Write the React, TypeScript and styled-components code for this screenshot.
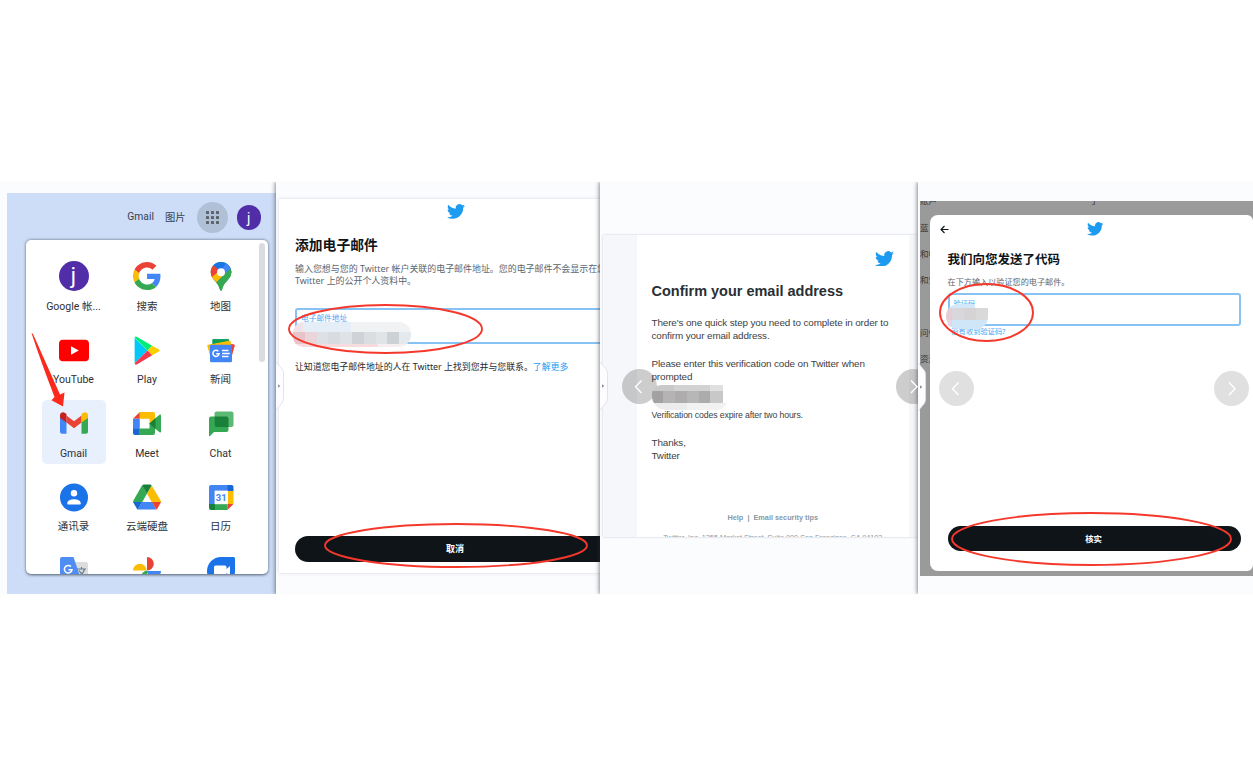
import React from "react";
import styled, { createGlobalStyle } from "styled-components";

const GlobalStyle = createGlobalStyle`
  * { box-sizing: border-box; }
  body { margin: 0; background: #fff; font-family: Roboto, "Noto Sans CJK SC", sans-serif; }
  p, h1, h2 { margin: 0; }
  svg { display: block; flex: none; }
`;

const Page = styled.main`
  width: 1253px;
  height: 775px;
  padding-top: 182px;
  overflow: hidden;
`;

const Strip = styled.div`
  display: grid;
  grid-template-columns: 276px 324px 318px 335px;
  height: 412px;
  overflow: hidden;
`;

const Column = styled.section<{ $pad: string; $raised?: boolean }>`
  position: relative;
  min-width: 0;
  padding: ${(p) => p.$pad};
  background: #fbfcfe;
  box-shadow: ${(p) => (p.$raised ? "-1px 0 4px rgba(40, 45, 60, 0.55)" : "none")};
`;

const Clip = styled.div`
  overflow: hidden;
`;

/* ---------- Google launcher ---------- */

const Desktop = styled.div`
  height: 401px;
  background: #cdddf7;
  padding-left: 19px;
`;

const TopBar = styled.header`
  display: flex;
  align-items: center;
  justify-content: flex-end;
  height: 47px;
  padding: 2px 15px 0 0;
  font-size: 10.3px;
  color: #35414f;
`;

const TopLink = styled.span<{ $gap: number }>`
  margin-right: ${(p) => p.$gap}px;
  padding-bottom: 1.5px;
`;

const GridButton = styled.div`
  display: grid;
  place-items: center;
  width: 31px;
  height: 31px;
  margin-right: 9px;
  border-radius: 50%;
  background: #b0c0d6;
`;

const Avatar = styled.div<{ $size: number; $font: number }>`
  display: grid;
  place-items: center;
  width: ${(p) => p.$size}px;
  height: ${(p) => p.$size}px;
  border-radius: 50%;
  background: #512da8;
  color: #fff;
  font-size: ${(p) => p.$font}px;
  line-height: 1;
`;

const Launcher = styled.div`
  display: flex;
  justify-content: space-between;
  width: 242px;
  height: 334px;
  padding: 3px 3px 0 15.5px;
  overflow: hidden;
  border-radius: 5px;
  background: #fff;
  box-shadow: 0 0.5px 3px rgba(50, 60, 75, 0.8);
`;

const AppGrid = styled.div`
  display: grid;
  grid-template-columns: repeat(3, 64px);
  grid-auto-rows: 64px;
  gap: 9.5px;
  padding-top: 9.5px;
`;

const AppCell = styled.div<{ $active?: boolean }>`
  display: flex;
  flex-direction: column;
  align-items: center;
  padding-top: 8.5px;
  border-radius: 5px;
  background: ${(p) => (p.$active ? "#e8f0fe" : "transparent")};
`;

const AppLabel = styled.span`
  margin-top: 8.5px;
  font-size: 10.5px;
  line-height: 14px;
  white-space: nowrap;
  color: #303134;
`;

const ScrollThumb = styled.div`
  width: 6px;
  height: 119px;
  border-radius: 3px;
  background: #dadce0;
`;

/* ---------- Twitter dialogs ---------- */

const EmailDialog = styled.div`
  height: 374px;
  padding: 5px 0 0 16px;
  background: #fff;
  box-shadow: 0 0 3px rgba(70, 80, 110, 0.22);
  font-family: "Noto Sans", "Noto Sans CJK SC", sans-serif;
`;

const Dim = styled.div`
  position: relative;
  height: 375px;
  padding: 13.5px 0 0 10px;
  overflow: hidden;
  background: #999a99;
  font-family: "Noto Sans", "Noto Sans CJK SC", sans-serif;
`;

const CodeDialog = styled.div`
  position: relative;
  height: 356.5px;
  padding: 7.5px 12.5px 0 17.5px;
  border-radius: 8px 6px 6px 8px;
  background: #fff;
`;

const LogoRow = styled.div<{ $shift: number }>`
  display: flex;
  padding-left: ${(p) => p.$shift}px;
`;

const Heading = styled.h1<{ $size: number; $top: number }>`
  margin-top: ${(p) => p.$top}px;
  font-size: ${(p) => p.$size}px;
  line-height: 20px;
  font-weight: 700;
  white-space: nowrap;
  color: #0f1419;
`;

const Copy = styled.p<{ $size: number; $top: number; $tone?: string }>`
  margin-top: ${(p) => p.$top}px;
  font-size: ${(p) => p.$size}px;
  line-height: 12px;
  white-space: pre;
  color: ${(p) => p.$tone ?? "#5b6670"};
`;

const Link = styled.span`
  color: #1d9bf0;
`;

const Field = styled.div<{ $h: number; $top: number; $open?: boolean }>`
  height: ${(p) => p.$h}px;
  margin-top: ${(p) => p.$top}px;
  padding: 2.5px 4px;
  border: 2px solid #86c2f2;
  border-right-width: ${(p) => (p.$open ? 0 : 2)}px;
  border-radius: ${(p) => (p.$open ? "3px 0 0 3px" : "3px")};
  font-size: ${(p) => (p.$open ? 7.7 : 7.2)}px;
  line-height: 12px;
  color: #3fa9f5;
`;

const PillButton = styled.div<{ $h: number; $top: number; $open?: boolean }>`
  display: flex;
  align-items: center;
  justify-content: center;
  height: ${(p) => p.$h}px;
  margin-top: ${(p) => p.$top}px;
  padding-right: ${(p) => (p.$open ? 0 : 1)}px;
  padding-bottom: 1.5px;
  padding-left: ${(p) => (p.$open ? 15 : 0)}px;
  border-radius: ${(p) => (p.$open ? "13px 0 0 13px" : "13px")};
  background: #0f1419;
  color: #fff;
  font-size: ${(p) => (p.$open ? 9 : 8.4)}px;
  font-weight: 700;
`;

const Behind = styled.span<{ $x: number; $y: number }>`
  position: absolute;
  left: ${(p) => p.$x}px;
  top: ${(p) => p.$y}px;
  font-size: 8.5px;
  line-height: 10px;
  white-space: nowrap;
  color: #33373a;
`;

const BackSlot = styled.div`
  position: absolute;
  left: 10px;
  top: 10px;
`;

/* ---------- Mail ---------- */

const Mail = styled.div`
  height: 302px;
  padding: 0 9px 0 34px;
  overflow: hidden;
  background: #f6f7fa;
  box-shadow: 0 0 2px rgba(70, 80, 110, 0.3);
  font-family: "Liberation Sans", Arial, sans-serif;
`;

const MailBody = styled.div`
  display: flex;
  flex-direction: column;
  height: 302px;
  padding: 15.5px 15px 0 14.5px;
  background: #fff;
`;

const MailLogo = styled.div`
  align-self: flex-end;
`;

const MailTitle = styled.h2`
  margin-top: 15px;
  font-size: 14.5px;
  line-height: 20px;
  letter-spacing: -0.01px;
  white-space: nowrap;
  color: #292f33;
`;

const MailText = styled.p<{ $top: number; $size?: number }>`
  margin-top: ${(p) => p.$top}px;
  font-size: ${(p) => p.$size ?? 9.9}px;
  line-height: 13.5px;
  letter-spacing: -0.12px;
  white-space: pre;
  color: #3c4043;
`;

const MailFooter = styled.p<{ $top: number; $size: number; $bold?: boolean }>`
  margin-top: ${(p) => p.$top}px;
  font-size: ${(p) => p.$size}px;
  line-height: 10px;
  font-weight: ${(p) => (p.$bold ? 700 : 400)};
  text-align: center;
  white-space: pre;
  color: #8899a6;
`;

/* ---------- Overlays ---------- */

const Overlay = styled.div<{ $x: number; $y: number }>`
  position: absolute;
  left: ${(p) => p.$x}px;
  top: ${(p) => p.$y}px;
  z-index: 2;
`;

const Mosaic = styled.div<{ $w: number; $r: string }>`
  display: flex;
  flex-direction: column;
  width: ${(p) => p.$w}px;
  border-radius: ${(p) => p.$r};
  overflow: hidden;
`;

const MosaicRow = styled.div<{ $h: number }>`
  display: flex;
  height: ${(p) => p.$h}px;
`;

const Tile = styled.div<{ $c: string; $w?: number }>`
  flex: ${(p) => (p.$w ? `0 0 ${p.$w}px` : "1 0 0")};
  background: ${(p) => p.$c};
`;

const Arrow = styled.div<{ $alpha: number }>`
  display: grid;
  place-items: center;
  width: 35px;
  height: 35px;
  border-radius: 50%;
  background: rgba(60, 60, 60, ${(p) => p.$alpha});
`;

const CropRight = styled.div`
  width: 22px;
  overflow: hidden;
`;

type MosaicData = { h: number; tiles: [string, number?][] }[];

const Pixels = ({ w, r, rows }: { w: number; r: string; rows: MosaicData }) => (
  <Mosaic $w={w} $r={r}>
    {rows.map((row, i) => (
      <MosaicRow key={i} $h={row.h}>
        {row.tiles.map(([c, tw], j) => (
          <Tile key={j} $c={c} $w={tw} />
        ))}
      </MosaicRow>
    ))}
  </Mosaic>
);

const Ring = ({ rx, ry }: { rx: number; ry: number }) => (
  <svg width={rx * 2 + 4} height={ry * 2 + 4}>
    <ellipse cx={rx + 2} cy={ry + 2} rx={rx} ry={ry} fill="none" stroke="#f5382c" strokeWidth="1.9" />
  </svg>
);

const Chevron = ({ dir }: { dir: "left" | "right" }) => (
  <svg width="35" height="35" viewBox="0 0 35 35">
    <path
      d={dir === "left" ? "M19.500 11.5L13.500 17.8L19.500 24" : "M15 11.5L21 17.8L15 24"}
      fill="none"
      stroke="#fff"
      strokeWidth="1.4"
    />
  </svg>
);

const Handle = () => (
  <svg width="9" height="50" viewBox="0 0 9 50">
    <path d="M0 1L6 8Q7.500 10 7.500 12V37Q7.500 40 6 42L0 49Z" fill="#fdfdff" />
    <path d="M0 1L6 8Q7.500 10 7.500 12V37Q7.500 40 6 42L0 49" fill="none" stroke="#dcdee5" strokeWidth="0.8" />
    <path d="M2 23.300L4.300 25L2 26.700Z" fill="#8b8f9c" />
  </svg>
);

const Bird = ({ w }: { w: number }) => (
  <svg width={w} height={(w * 20) / 24} viewBox="0 2 24 20">
    <path
      fill="#1d9bf0"
      d="M23.953 4.57a10 10 0 01-2.825.775 4.958 4.958 0 002.163-2.723c-.951.555-2.005.959-3.127 1.184a4.92 4.92 0 00-8.384 4.482C7.69 8.095 4.067 6.13 1.64 3.162a4.822 4.822 0 00-.666 2.475c0 1.71.87 3.213 2.188 4.096a4.904 4.904 0 01-2.228-.616v.06a4.923 4.923 0 003.946 4.827 4.996 4.996 0 01-2.212.085 4.936 4.936 0 004.604 3.417 9.867 9.867 0 01-6.102 2.105c-.39 0-.779-.023-1.17-.067a13.995 13.995 0 007.557 2.209c9.053 0 13.998-7.496 13.998-13.985 0-.21 0-.42-.015-.63A9.935 9.935 0 0024 4.59z"
    />
  </svg>
);

const Icon = ({ children }: { children: React.ReactNode }) => (
  <svg width="30" height="30" viewBox="0 0 30 30">
    {children}
  </svg>
);

const GoogleG = () => (
  <Icon>
    <g transform="translate(1 1) scale(.585)">
      <path fill="#ea4335" d="M24 9.5c3.54 0 6.71 1.22 9.21 3.6l6.85-6.85C35.9 2.38 30.47 0 24 0 14.62 0 6.51 5.38 2.56 13.22l7.98 6.19C12.43 13.72 17.74 9.5 24 9.5z" />
      <path fill="#4285f4" d="M46.98 24.55c0-1.57-.15-3.09-.38-4.55H24v9.02h12.94c-.58 2.96-2.26 5.48-4.78 7.18l7.73 6c4.51-4.18 7.09-10.36 7.09-17.65z" />
      <path fill="#fbbc05" d="M10.53 28.59c-.48-1.45-.76-2.99-.76-4.59s.27-3.14.76-4.59l-7.98-6.19C.92 16.46 0 20.12 0 24c0 3.88.92 7.54 2.56 10.78l7.97-6.19z" />
      <path fill="#34a853" d="M24 48c6.48 0 11.93-2.13 15.89-5.81l-7.73-6c-2.15 1.45-4.92 2.3-8.16 2.3-6.26 0-11.57-4.22-13.47-9.91l-7.98 6.19C6.51 42.62 14.62 48 24 48z" />
    </g>
  </Icon>
);

const PIN = "M15 1C9.200 1 4.700 5.500 4.700 11.200C4.700 18.500 12.500 20.500 14 28.700Q15 31 16 28.700C17.500 20.500 25.300 18.500 25.300 11.200C25.300 5.500 20.800 1 15 1Z";

const MapsPin = () => (
  <Icon>
    <clipPath id="pin">
      <path d={PIN} />
    </clipPath>
    <g clipPath="url(#pin)">
      <rect width="30" height="30" fill="#34a853" />
      <path d="M0 0H30V3L15 11L7.500 4.600L0 0Z" fill="#1a73e8" />
      <path d="M20 0H30V9L11.500 30L5 24L25 1Z" fill="#34a853" />
      <path d="M21.500 0L30 0V9L22 15L16 8Z" fill="#4285f4" />
      <path d="M22 3L25.500 8L11 24L6 19Z" fill="#4285f4" />
      <path d="M0 2L7.300 4.300L14 10L6 20L0 20Z" fill="#ea4335" />
      <path d="M12 11L4 17.500L9.500 22.500L19 13Z" fill="#fbbc04" />
      <path d="M9 22.600L25.600 6.500L27 30H5Z" fill="#34a853" />
    </g>
    <circle cx="15" cy="11.300" r="4" fill="#fff" />
  </Icon>
);

const YouTube = () => (
  <Icon>
    <rect x="0" y="4.800" width="30" height="21.400" rx="4" fill="#f00" />
    <path d="M12 11.300L19.800 15.500L12 19.700Z" fill="#fff" />
  </Icon>
);

const Play = () => (
  <Icon>
    <path d="M2.600 2.800V28.200L15.500 15.500Z" fill="#00c8f8" />
    <path d="M2.600 2.600Q3 .8 5.200 2L20.200 10.800L15.500 15.500Z" fill="#00ee76" />
    <path d="M20.200 10.800L27 14.500Q28.500 15.500 27 16.500L20.200 20.200L15.500 15.500Z" fill="#ffce00" />
    <path d="M2.600 28.200Q3 30.500 5.200 29.200L20.200 20.200L15.500 15.500Z" fill="#f5384e" />
  </Icon>
);

const News = () => (
  <Icon>
    <rect x="6.500" y="4.300" width="16.500" height="12" rx="1" fill="#0c9d58" />
    <path d="M19 7.600L28.300 9.500Q29 9.800 28.800 10.500L25 24L17 18Z" fill="#ea4335" />
    <path d="M1.300 11Q1 10 2 9.700L23.500 5.600Q24.500 5.500 24.600 6.500L25.500 11L5 24Z" fill="#fbbc04" />
    <path d="M6.500 5.300Q6.500 4.300 7.500 4.300H22Q23 4.300 23 5.600L6.500 8.800Z" fill="#0c9d58" />
    <rect x="4" y="9.700" width="22" height="17.500" rx="1.200" fill="#4285f4" />
    <path d="M12.300 16.200A3.100 3.100 0 1 0 13.100 18.700H10.200" fill="none" stroke="#fff" strokeWidth="1.500" />
    <path d="M16 15.600H22.500M16 18.600H23.800M16 21.600H22.500" stroke="#fff" strokeWidth="1.500" />
  </Icon>
);

const Gmail = () => (
  <Icon>
    <path d="M1 9L7.500 13.500V25.800H3Q1 25.800 1 23.800Z" fill="#4285f4" />
    <path d="M29 9L22.500 13.500V25.800H27Q29 25.800 29 23.800Z" fill="#34a853" />
    <path d="M7.500 7.500L15 13.200L22.500 7.500V14.500L15 20.200L7.500 14.500Z" fill="#ea4335" />
    <path d="M1 10V7.200C1 4.400 4.200 3.600 6 4.900L7.500 6.100V14.600L1 10Z" fill="#c5221f" />
    <path d="M29 10V7.200C29 4.400 25.800 3.600 24 4.900L22.500 6.100V14.600L29 10Z" fill="#fbbc04" />
  </Icon>
);

const Meet = () => (
  <Icon>
    <path d="M7.800 4L1 10.800H7.800Z" fill="#ea4335" />
    <path d="M7.800 4H21Q23 4 23 6V10.500L17.500 16V10.800H7.800Z" fill="#fbbc04" />
    <rect x="1" y="10.800" width="6.800" height="10" fill="#4285f4" />
    <path d="M1 20.500H7.800V27H3Q1 27 1 25Z" fill="#1967d2" />
    <path d="M7.800 20.500H17.500V15L23 19.500V25Q23 27 21 27H7.800Z" fill="#34a853" />
    <path d="M23 10.500L27.500 6.800Q29 6 29 7.600V23.400Q29 25 27.500 24.200L23 20.500Z" fill="#34a853" />
    <path d="M23.500 10L17.300 15.500L23.500 21Z" fill="#188038" />
  </Icon>
);

const Chat = () => (
  <Icon>
    <path d="M3 10.500Q3 8.500 5 8.500H20Q22.500 8.500 22.500 10.500V22Q22.500 24 20.500 24H8L4 28Q3 28.800 3 27Z" fill="#34a853" />
    <rect x="8.500" y="3.500" width="19" height="15.500" rx="2" fill="#5bb974" />
    <path d="M8.500 8.500H20.500Q22.500 8.500 22.500 10.500V19H10.500Q8.500 19 8.500 17Z" fill="#188038" />
  </Icon>
);

const Contacts = () => (
  <Icon>
    <circle cx="15" cy="15.500" r="14" fill="#1a73e8" />
    <circle cx="15" cy="11.200" r="3.200" fill="#fff" />
    <path d="M8.200 21.500C8.200 18.500 12 17.200 15 17.200S21.800 18.500 21.800 21.500Q21.800 22.500 20.800 22.500H9.200Q8.200 22.500 8.200 21.500Z" fill="#fff" />
  </Icon>
);

const Drive = () => (
  <Icon>
    <path d="M10.300 3L1.300 18.800Q.8 19.800 1.300 20.500H10L15 11.500Z" fill="#34a853" />
    <path d="M10.300 3.500Q11 2.500 12 2.500H18Q19 2.500 19.700 3.500L15 11.700Z" fill="#188038" />
    <path d="M19.700 3.500L28.700 18.800Q29.200 19.800 29 20.500H20L15 11.700Z" fill="#fbbc04" />
    <path d="M1 20H10L5.800 27.500Q5 27 4.500 26Z" fill="#1967d2" />
    <path d="M9.800 20H20.200L24.200 27.600H5.600Z" fill="#4285f4" />
    <path d="M20 20H29L25.500 26.500Q25 27.300 24.200 27.600Z" fill="#ea4335" />
  </Icon>
);

const Calendar = () => (
  <Icon>
    <path d="M3 5Q3 3 5 3H22V9H9V22H3Z" fill="#4285f4" />
    <path d="M21.500 3H25.500Q27.500 3 27.500 5V9H21.500Z" fill="#1967d2" />
    <rect x="21.500" y="9" width="6" height="13" fill="#fbbc04" />
    <path d="M9 22H21.500V28H9Z" fill="#34a853" />
    <path d="M3 22H9V28H5Q3 28 3 26Z" fill="#188038" />
    <path d="M21.500 22H27.500L21.500 28Z" fill="#ea4335" />
    <rect x="8.600" y="8.600" width="13.200" height="13.600" fill="#fff" />
    <text x="15.200" y="19" textAnchor="middle" fontFamily="Roboto, sans-serif" fontSize="9.500" fontWeight="700" fill="#4285f4">31</text>
  </Icon>
);

const Translate = () => (
  <Icon>
    <path d="M12 7H27Q29 7 29 9V30H18Z" fill="#dcdddf" />
    <path d="M3 2H14.500L21.500 23H3Q1 23 1 21V4Q1 2 3 2Z" fill="#4f8df5" />
    <path d="M12 11.600A3.800 3.800 0 1 0 13 14.700H9.500" fill="none" stroke="#fff" strokeWidth="1.500" />
    <path d="M18 14H27M22.500 12V14M25.500 14C24.500 18 22 20 20 21M20 15.500Q22 19 26 20.500" fill="none" stroke="#607d8b" strokeWidth="1.200" />
  </Icon>
);

const Photos = () => (
  <Icon>
    <path d="M1 15.500A6.800 6.800 0 0 1 14.600 15.500Z" fill="#fbbc04" />
    <path d="M15 2A6.800 6.800 0 0 1 15 15.600Z" fill="#ea4335" />
    <path d="M15 16H29A7 7 0 0 1 15 16Z" fill="#4285f4" />
    <path d="M15 15.500V29A6.800 6.800 0 0 1 15 15.500Z" fill="#34a853" />
  </Icon>
);

const Duo = () => (
  <Icon>
    <path d="M15 2H27.500Q29 2 29 3.500V16A14 14 0 0 1 1 16C1 8.300 7.300 2 15 2Z" fill="#1a73e8" />
    <path d="M9.500 10.500H19Q20.500 10.500 20.500 12V14L24 11V21L20.500 18V22H8V12Q8 10.500 9.500 10.500Z" fill="#fff" />
  </Icon>
);

const AccountBadge = () => (
  <Avatar $size={30} $font={22}>
    j
  </Avatar>
);

const APPS: { label: string; icon: React.ComponentType; active?: boolean }[] = [
  { label: "Google 帐...", icon: AccountBadge },
  { label: "搜索", icon: GoogleG },
  { label: "地图", icon: MapsPin },
  { label: "YouTube", icon: YouTube },
  { label: "Play", icon: Play },
  { label: "新闻", icon: News },
  { label: "Gmail", icon: Gmail, active: true },
  { label: "Meet", icon: Meet },
  { label: "Chat", icon: Chat },
  { label: "通讯录", icon: Contacts },
  { label: "云端硬盘", icon: Drive },
  { label: "日历", icon: Calendar },
  { label: "", icon: Translate },
  { label: "", icon: Photos },
  { label: "", icon: Duo },
];

const GoogleColumn = () => (
  <Column $pad="11px 0 0 7px">
    <Desktop>
      <TopBar>
        <TopLink $gap={11}>Gmail</TopLink>
        <TopLink $gap={11}>图片</TopLink>
        <GridButton>
          <svg width="13" height="13" viewBox="0 0 13 13" fill="#5d636b">
            {[0, 5, 10].map((y) =>
              [0, 5, 10].map((x) => <rect key={`${x}-${y}`} x={x} y={y} width="3" height="3" rx=".6" />)
            )}
          </svg>
        </GridButton>
        <Avatar $size={24.5} $font={14}>
          j
        </Avatar>
      </TopBar>
      <Launcher>
        <AppGrid>
          {APPS.map(({ label, icon: Glyph, active }, i) => (
            <AppCell key={i} $active={active}>
              <Glyph />
              <AppLabel>{label}</AppLabel>
            </AppCell>
          ))}
        </AppGrid>
        <ScrollThumb />
      </Launcher>
    </Desktop>
    <Overlay $x={30} $y={149}>
      <svg width="38" height="78" viewBox="30 331 38 78">
        <path d="M31.500 333L33 334L60 394.500L64.500 392.500L63 406.500L51.500 400.300L54.500 397Q41 362 31.500 333Z" fill="#fb2a1c" />
      </svg>
    </Overlay>
  </Column>
);

const EmailColumn = () => (
  <Column $pad="17px 0 0 3px" $raised>
    <EmailDialog>
      <Clip>
        <LogoRow $shift={152}>
          <Bird w={18} />
        </LogoRow>
        <Heading $size={13.8} $top={16}>添加电子邮件</Heading>
        <Copy $size={8.95} $top={7.5}>
          {"输入您想与您的 Twitter 帐户关联的电子邮件地址。您的电子邮件不会显示在您\nTwitter 上的公开个人资料中。"}
        </Copy>
        <Field $h={36} $top={21} $open>电子邮件地址</Field>
        <Copy $size={8.9} $top={17} $tone="#24292e">
          让知道您电子邮件地址的人在 Twitter 上找到您并与您联系。<Link>了解更多</Link>
        </Copy>
        <PillButton $h={26.5} $top={163} $open>取消</PillButton>
      </Clip>
    </EmailDialog>
    <Overlay $x={17} $y={139.5}>
      <Pixels
        w={118}
        r="11px 12px 12px 10px"
        rows={[
          { h: 10, tiles: [["#f0e3e8", 10], ["#e5edf7", 48], ["#f0f2f4"]] },
          {
            h: 12,
            tiles: [["#e8c4ca"], ["#ead5d9"], ["#dde0e4"], ["#d8dce0"], ["#dfe3e6"], ["#cfd3d7"], ["#dadee1"], ["#e0e4e7"], ["#ccd1d5"], ["#e3e9ec"]],
          },
          { h: 3, tiles: [["#f6dcdf", 85], ["#f6eff1"]] },
        ]}
      />
    </Overlay>
    <Overlay $x={10.5} $y={121}>
      <Ring rx={96.5} ry={24} />
    </Overlay>
    <Overlay $x={46.5} $y={339.5}>
      <Ring rx={131} ry={21.5} />
    </Overlay>
    <Overlay $x={0} $y={179}>
      <Handle />
    </Overlay>
  </Column>
);

const MailColumn = () => (
  <Column $pad="53px 0 0 3px" $raised>
    <Mail>
      <MailBody>
        <MailLogo>
          <Bird w={19} />
        </MailLogo>
        <MailTitle>Confirm your email address</MailTitle>
        <MailText $top={14.5}>{"There's one quick step you need to complete in order to\nconfirm your email address."}</MailText>
        <MailText $top={14}>{"Please enter this verification code on Twitter when\nprompted"}</MailText>
        <MailText $top={25.5} $size={8.7}>Verification codes expire after two hours.</MailText>
        <MailText $top={13}>{"Thanks,\nTwitter"}</MailText>
        <MailFooter $top={50.5} $size={7.3} $bold>{"Help  |  Email security tips"}</MailFooter>
        <MailFooter $top={9.5} $size={7.25}>Twitter, Inc. 1355 Market Street, Suite 900 San Francisco, CA 94103</MailFooter>
      </MailBody>
    </Mail>
    <Overlay $x={21.5} $y={187}>
      <Arrow $alpha={0.26}>
        <Chevron dir="left" />
      </Arrow>
    </Overlay>
    <Overlay $x={296} $y={187}>
      <CropRight>
        <Arrow $alpha={0.26}>
          <Chevron dir="right" />
        </Arrow>
      </CropRight>
    </Overlay>
    <Overlay $x={52} $y={203}>
      <Pixels
        w={76}
        r="9px 0 12px 14px"
        rows={[
          { h: 6, tiles: [["#c9c9c9", 22], ["#d2d2d2", 36], ["#e0e0e0", 13], ["#fff"]] },
          { h: 12, tiles: [["#a3a1a1", 11], ["#b5b3b3", 12], ["#aeacac", 12], ["#b8b7b7", 12], ["#adabab", 11], ["#c8c8c8", 13], ["#fff"]] },
          { h: 7, tiles: [["#ececec", 35], ["#f2f2f2"]] },
        ]}
      />
    </Overlay>
    <Overlay $x={0} $y={179}>
      <Handle />
    </Overlay>
  </Column>
);

const CodeColumn = () => (
  <Column $pad="19px 0 0 2px" $raised>
    <Dim>
      <Behind $x={0} $y={-5}>账户</Behind>
      <Behind $x={170} $y={-5}>了</Behind>
      <Behind $x={0} $y={22}>蓝</Behind>
      <Behind $x={0} $y={48}>和帐</Behind>
      <Behind $x={0} $y={74}>和安</Behind>
      <Behind $x={0} $y={127}>问性</Behind>
      <Behind $x={0} $y={153}>资源</Behind>
      <CodeDialog>
        <BackSlot>
          <svg width="9" height="9" viewBox="0 0 9 9">
            <path d="M8.500 4.500H1M4.500 1L1 4.500L4.500 8" fill="none" stroke="#0f1419" strokeWidth="1.100" />
          </svg>
        </BackSlot>
        <LogoRow $shift={139}>
          <Bird w={16.5} />
        </LogoRow>
        <Heading $size={12.5} $top={14.5}>我们向您发送了代码</Heading>
        <Copy $size={8.15} $top={5.5}>在下方输入以验证您的电子邮件。</Copy>
        <Field $h={33} $top={5}>验证码</Field>
        <Copy $size={7.3} $top={-1} $tone="#3fa9f5">{"  没有收到验证码?"}</Copy>
        <PillButton $h={25} $top={189.5}>核实</PillButton>
      </CodeDialog>
    </Dim>
    <Overlay $x={28} $y={122}>
      <Pixels
        w={42}
        r="12px 3px 12px 12px"
        rows={[
          { h: 4, tiles: [["#d3e9fa", 29], ["#fff"]] },
          { h: 12, tiles: [["#e6cdd5", 6], ["#d8d8dc", 12], ["#d6d3d5", 12], ["#d9d9da"]] },
          { h: 9, tiles: [["#ead5dc", 6], ["#cfe6f8"]] },
        ]}
      />
    </Overlay>
    <Overlay $x={19.5} $y={99.5}>
      <Ring rx={46.5} ry={28.5} />
    </Overlay>
    <Overlay $x={32} $y={328.5}>
      <Ring rx={139.5} ry={26} />
    </Overlay>
    <Overlay $x={21} $y={189}>
      <Arrow $alpha={0.16}>
        <Chevron dir="left" />
      </Arrow>
    </Overlay>
    <Overlay $x={296} $y={189}>
      <Arrow $alpha={0.16}>
        <Chevron dir="right" />
      </Arrow>
    </Overlay>
    <Overlay $x={0} $y={180}>
      <Handle />
    </Overlay>
  </Column>
);

const App = () => (
  <>
    <GlobalStyle />
    <Page>
      <Strip>
        <GoogleColumn />
        <EmailColumn />
        <MailColumn />
        <CodeColumn />
      </Strip>
    </Page>
  </>
);

export default App;
